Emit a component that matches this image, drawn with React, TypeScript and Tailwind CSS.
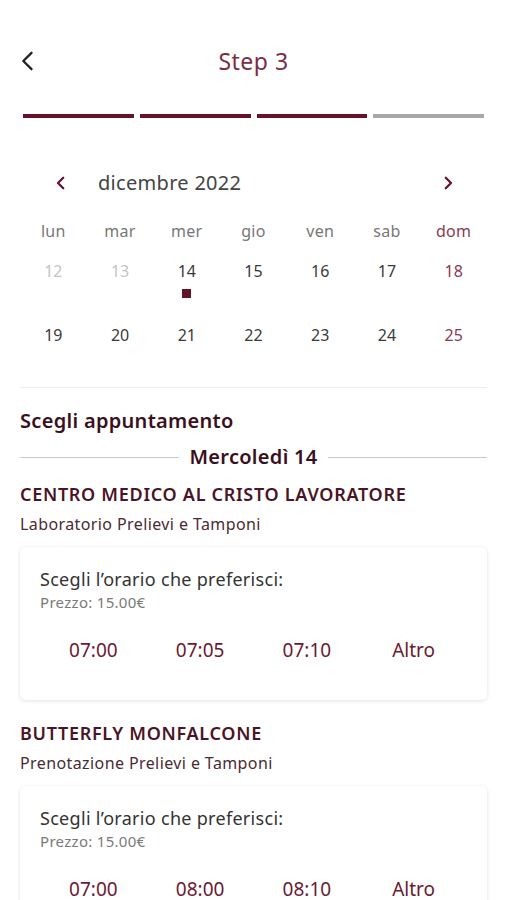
import React from "react";

const WEEKDAYS = ["lun", "mar", "mer", "gio", "ven", "sab", "dom"];

const ROWS = [
  [
    { d: 12, muted: true },
    { d: 13, muted: true },
    { d: 14, dot: true },
    { d: 15 },
    { d: 16 },
    { d: 17 },
    { d: 18, sunday: true },
  ],
  [
    { d: 19 },
    { d: 20 },
    { d: 21 },
    { d: 22 },
    { d: 23 },
    { d: 24 },
    { d: 25, sunday: true },
  ],
];

type Center = { name: string; service: string; slots: string[] };

const CENTERS: Center[] = [
  {
    name: "CENTRO MEDICO AL CRISTO LAVORATORE",
    service: "Laboratorio Prelievi e Tamponi",
    slots: ["07:00", "07:05", "07:10"],
  },
  {
    name: "BUTTERFLY MONFALCONE",
    service: "Prenotazione Prelievi e Tamponi",
    slots: ["07:00", "08:00", "08:10"],
  },
];

const Chevron = ({ dir, className }: { dir: "left" | "right"; className: string }) => (
  <svg viewBox="0 0 24 24" className={className} fill="none" stroke="currentColor" strokeLinecap="round" strokeLinejoin="round">
    {dir === "left" ? <path d="M15 5l-7 7 7 7" /> : <path d="M9 5l7 7-7 7" />}
  </svg>
);

function CenterBlock({ c }: { c: Center }) {
  return (
    <div className="flex flex-col">
      <h3 className="text-[18px] font-semibold tracking-[0.7px] text-[#4a1426] leading-6">{c.name}</h3>
      <p className="mt-[8px] text-[16px] tracking-[0.4px] text-[#4a2a33] leading-5">{c.service}</p>
      <div className="mt-[13px] rounded-md bg-white shadow-[0_1px_4px_rgba(0,0,0,0.12)] px-5 pt-[20px] pb-[38px]">
        <p className="text-[18px] tracking-[0.3px] text-[#333] leading-6">Scegli l’orario che preferisci:</p>
        <p className="text-[15px] tracking-[0.3px] text-[#7a7a7a] leading-5 mt-[1px]">Prezzo: 15.00€</p>
        <div className="mt-[26px] grid grid-cols-4 text-center text-[19px] text-[#6b1a33] leading-6">
          {c.slots.map((s) => (
            <span key={s}>{s}</span>
          ))}
          <span>Altro</span>
        </div>
      </div>
    </div>
  );
}

export default function App() {
  return (
    <div className="h-[900px] overflow-hidden bg-white font-['Noto_Sans',sans-serif]">
      {/* header */}
      <div className="relative flex h-[60px] items-center justify-center mt-[31px]">
        <Chevron dir="left" className="absolute left-[14px] top-[16px] h-[28px] w-[28px] stroke-[2] text-[#222]" />
        <h1 className="text-[23px] tracking-[0.5px] text-[#7a2e45]">Step 3</h1>
      </div>

      {/* progress */}
      <div className="mx-[23px] mt-[23px] grid grid-cols-4 gap-[6px]">
        <div className="h-[4px] bg-[#661229]" />
        <div className="h-[4px] bg-[#661229]" />
        <div className="h-[4px] bg-[#661229]" />
        <div className="h-[4px] bg-[#a8a8a8]" />
      </div>

      {/* calendar */}
      <div className="mx-5 mt-[52px]">
        <div className="flex items-center h-[26px]">
          <Chevron dir="left" className="ml-[32px] h-[18px] w-[18px] stroke-[3] text-[#661229]" />
          <span className="ml-[28px] text-[20px] tracking-[0.3px] text-[#444]">dicembre 2022</span>
          <Chevron dir="right" className="ml-auto mr-[30px] h-[18px] w-[18px] stroke-[3] text-[#661229]" />
        </div>
        <div className="mt-[23px] grid grid-cols-7 text-center text-[16px] tracking-[0.3px] text-[#777]">
          {WEEKDAYS.map((w) => (
            <span key={w} className={w === "dom" ? "text-[#8a3a55]" : ""}>
              {w}
            </span>
          ))}
        </div>
        {ROWS.map((row, i) => (
          <div key={i} className={`grid grid-cols-7 text-center text-[16px] ${i === 0 ? "mt-[16px] h-[56px]" : "mt-[8px] h-[40px]"}`}>
            {row.map((c) => (
              <div key={c.d} className="flex flex-col items-center">
                <span
                  className={
                    c.muted ? "text-[#c4c4c4]" : c.sunday ? "text-[#8a3a55]" : "text-[#3a3a3a]"
                  }
                >
                  {c.d}
                </span>
                {c.dot && <span className="mt-[6px] h-[9px] w-[9px] bg-[#661229]" />}
              </div>
            ))}
          </div>
        ))}
      </div>

      <div className="mx-5 mt-[24px] h-px bg-[#eeeeee]" />

      {/* appointments */}
      <div className="mx-5 mt-[21px]">
        <h2 className="text-[20px] font-semibold tracking-[0.3px] text-[#3a1020] leading-6">Scegli appuntamento</h2>
        <div className="mt-[12px] flex items-center gap-[10px]">
          <div className="h-px flex-1 bg-[#c8c8c8]" />
          <span className="text-[20px] font-semibold tracking-[0.3px] text-[#3a1020] leading-6">Mercoledì 14</span>
          <div className="h-px flex-1 bg-[#c8c8c8]" />
        </div>
        <div className="mt-[13px] flex flex-col gap-[21px]">
          {CENTERS.map((c) => (
            <CenterBlock key={c.name} c={c} />
          ))}
        </div>
      </div>
    </div>
  );
}
